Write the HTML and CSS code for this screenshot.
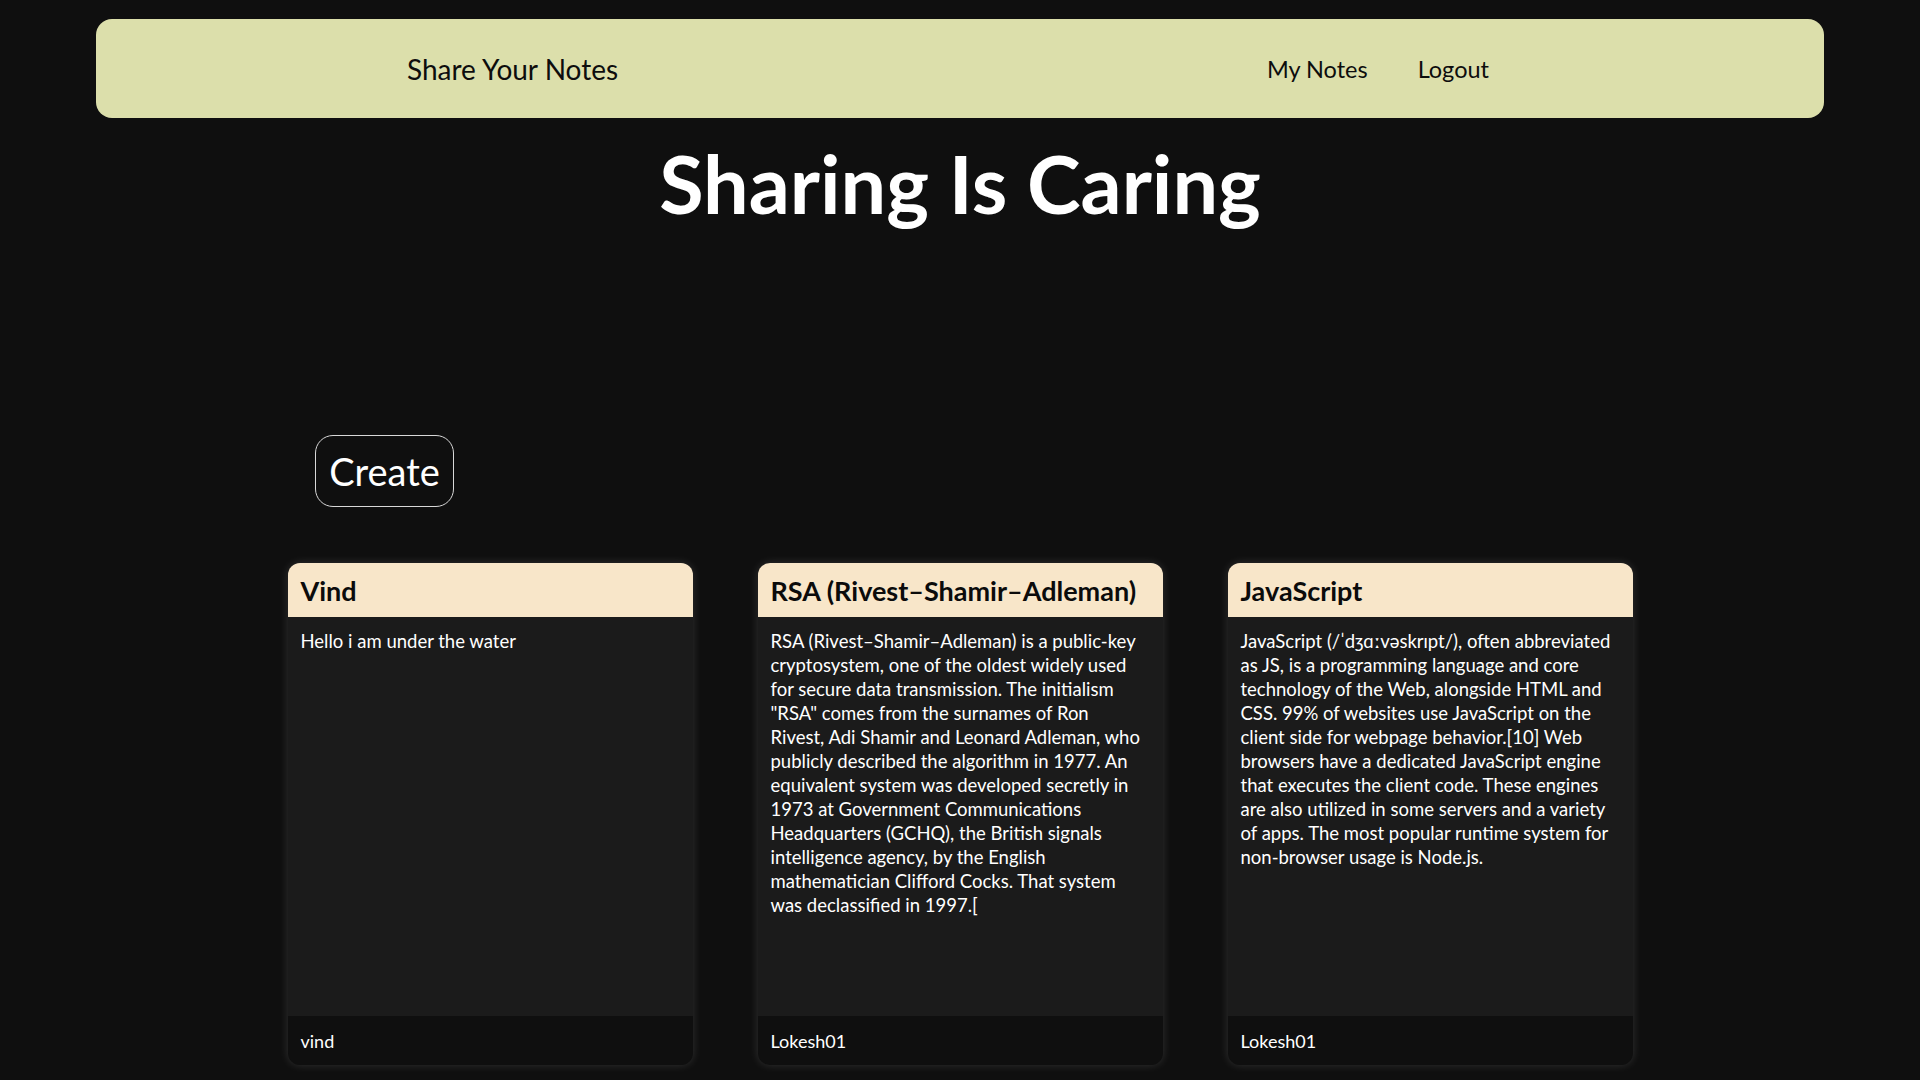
FILE: index.html
```html
<!DOCTYPE html>
<html lang="en">
<head>
<meta charset="utf-8">
<title>Share Your Notes</title>
<link rel="stylesheet" href="styles.css">
</head>
<body>
<nav class="navbar">
  <a class="brand" href="#">Share Your Notes</a>
  <div class="nav-links">
    <a href="#">My Notes</a>
    <a href="#">Logout</a>
  </div>
</nav>
<h1 class="title">Sharing Is Caring</h1>
<div class="actions">
  <button class="create-btn">Create</button>
</div>
<main class="cards">
  <article class="card">
    <header class="card-head">Vind</header>
    <div class="card-body">Hello i am under the water</div>
    <footer class="card-foot">vind</footer>
  </article>
  <article class="card">
    <header class="card-head">RSA (Rivest–Shamir–Adleman)</header>
    <div class="card-body">RSA (Rivest–Shamir–Adleman) is a public-key cryptosystem, one of the oldest widely used for secure data transmission. The initialism "RSA" comes from the surnames of Ron Rivest, Adi Shamir and Leonard Adleman, who publicly described the algorithm in 1977. An equivalent system was developed secretly in 1973 at Government Communications Headquarters (GCHQ), the British signals intelligence agency, by the English mathematician Clifford Cocks. That system was declassified in 1997.[</div>
    <footer class="card-foot">Lokesh01</footer>
  </article>
  <article class="card">
    <header class="card-head">JavaScript</header>
    <div class="card-body">JavaScript (/ˈdʒɑːvəskrɪpt/), often abbreviated as JS, is a programming language and core technology of the Web, alongside HTML and CSS. 99% of websites use JavaScript on the client side for webpage behavior.[10] Web browsers have a dedicated JavaScript engine that executes the client code. These engines are also utilized in some servers and a variety of apps. The most popular runtime system for non-browser usage is Node.js.</div>
    <footer class="card-foot">Lokesh01</footer>
  </article>
</main>
</body>
</html>
```
FILE: styles.css
```css
* { box-sizing: border-box; }
html, body { margin: 0; padding: 0; }
body {
  background: #0f0f0f;
  color: #fff;
  font-family: Lato, "Open Sans", sans-serif;
  padding-top: 19px;
  min-height: 1080px;
}
.navbar {
  margin: 0 96px;
  height: 99px;
  background: #dcdfab;
  border-radius: 16px;
  display: flex;
  align-items: center;
  justify-content: space-between;
  padding: 0 335px 0 311px;
}
.navbar a {
  color: #0d0d0d;
  text-decoration: none;
  font-size: 23.5px;
}
.navbar .brand { font-size: 28px; }
.nav-links { display: flex; gap: 50px; }
.title {
  margin: 16px 0 0;
  text-align: center;
  font-size: 81px;
  font-weight: 700;
  line-height: 98px;
}
.actions {
  padding-left: 315px;
  margin-top: 203px;
}
.create-btn {
  background: transparent;
  color: #fff;
  border: 1.5px solid #d8d8d8;
  border-radius: 18px;
  width: 139px;
  height: 72px;
  font-family: inherit;
  font-size: 38px;
  padding: 0;
}
.cards {
  display: flex;
  justify-content: center;
  gap: 65px;
  margin-top: 56px;
}
.card {
  width: 405px;
  height: 502px;
  border-radius: 12px;
  overflow: hidden;
  display: flex;
  flex-direction: column;
  box-shadow: 0 0 10px rgba(255,255,255,0.14);
  background: #1b1b1b;
}
.card-head {
  background: #f8e6c9;
  color: #0b0b0b;
  height: 54px;
  display: flex;
  align-items: center;
  padding: 0 13px;
  font-weight: 700;
  font-size: 27px;
}
.card-body {
  flex: 1;
  padding: 12px 18px 12px 13px;
  font-size: 18.5px;
  line-height: 24px;
}
.card-foot {
  background: #0f0f0f;
  height: 49px;
  display: flex;
  align-items: center;
  padding: 0 13px;
  font-size: 18px;
}
```
